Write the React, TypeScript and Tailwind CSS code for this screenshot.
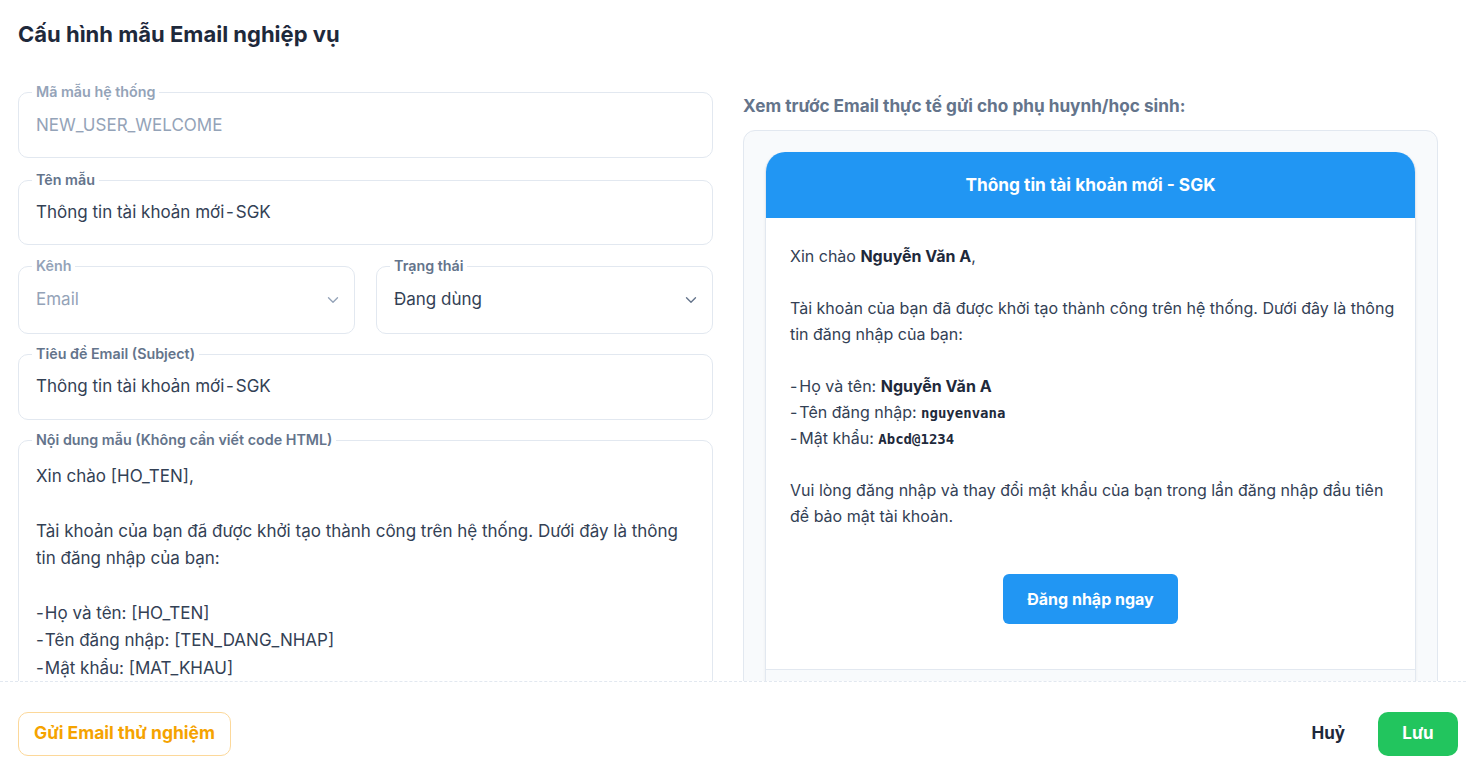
import React from "react";

const FONT = "font-['Inter','Noto_Sans',sans-serif]";
const MONO = "font-['DejaVu_Sans_Mono',monospace]";

// hyphen with tight spacing on both sides
function Dash() {
  return <span className="[word-spacing:-3px]"> - </span>;
}

function Field({
  label,
  children,
  muted = false,
  className = "",
  contentClass = "h-[46px] mb-[8px]",
}: {
  label: string;
  children: React.ReactNode;
  muted?: boolean;
  className?: string;
  contentClass?: string;
}) {
  return (
    <fieldset className={`border border-[#e2e8f0] rounded-[10px] px-[17px] min-w-0 ${className}`}>
      <legend
        className={`px-[4px] -ml-[4px] text-[14.3px] leading-[20px] font-semibold ${
          muted ? "text-[#94a3b8]" : "text-[#64748b]"
        }`}
      >
        {label}
      </legend>
      <div className={`flex items-center ${contentClass}`}>{children}</div>
    </fieldset>
  );
}

function Chevron({ className = "" }: { className?: string }) {
  return (
    <svg viewBox="0 0 24 24" width="18" height="18" fill="none" stroke="currentColor" strokeWidth="1.8" strokeLinecap="round" strokeLinejoin="round" className={className}>
      <path d="M6 9l6 6 6-6" />
    </svg>
  );
}

// visible part of the template body (the rest sits below the scroll fold)
const bodyLines: React.ReactNode[] = [
  "Xin chào [HO_TEN],",
  "",
  "Tài khoản của bạn đã được khởi tạo thành công trên hệ thống. Dưới đây là thông",
  "tin đăng nhập của bạn:",
  "",
  <>-<span className="ml-[1px]">Họ và tên: [HO_TEN]</span></>,
  <>-<span className="ml-[1px]">Tên đăng nhập: [TEN_DANG_NHAP]</span></>,
  <>-<span className="ml-[1px]">Mật khẩu: [MAT_KHAU]</span></>,
];

export default function App() {
  return (
    <div className={`h-[768px] w-full flex flex-col bg-white text-[#1e293b] ${FONT}`}>
      <div className="h-[681px] overflow-hidden pl-[18px] pr-[28px]">
        <h1 className="text-[22px] font-bold leading-[30px] mt-[19px] text-[#1e293b]">Cấu hình mẫu Email nghiệp vụ</h1>

        <div className="grid grid-cols-2 gap-[30px] mt-[33px]">
          {/* form column */}
          <div className="flex flex-col">
            <Field label="Mã mẫu hệ thống" muted contentClass="h-[47px] mb-[8px]">
              <span className="text-[17px] text-[#94a3b8]">NEW_USER_WELCOME</span>
            </Field>
            <Field label="Tên mẫu" className="mt-[12px]">
              <span className="text-[17px] text-[#334155] whitespace-nowrap">
                Thông tin tài khoản mới<Dash />SGK
              </span>
            </Field>
            <div className="grid grid-cols-2 gap-[21px] mt-[11px]">
              <Field label="Kênh" muted contentClass="h-[49px] pb-[2px] mb-[8px]">
                <span className="text-[17px] text-[#94a3b8] flex-1">Email</span>
                <Chevron className="text-[#94a3b8] -mr-[5px]" />
              </Field>
              <Field label="Trạng thái" contentClass="h-[49px] pb-[2px] mb-[8px]">
                <span className="text-[17px] text-[#334155] flex-1">Đang dùng</span>
                <Chevron className="text-[#64748b] -mr-[5px]" />
              </Field>
            </div>
            <Field label="Tiêu đề Email (Subject)" className="mt-[10px]" contentClass="h-[46px] mb-[9px]">
              <span className="text-[17px] text-[#334155] whitespace-nowrap">
                Thông tin tài khoản mới<Dash />SGK
              </span>
            </Field>
            <fieldset className="mt-[10px] border border-[#e2e8f0] rounded-[10px] px-[17px] min-w-0">
              <legend className="px-[4px] -ml-[4px] text-[14.3px] leading-[20px] font-semibold text-[#64748b]">
                Nội dung mẫu (Không cần viết code HTML)
              </legend>
              <div className="pt-[13px] pb-[80px] text-[17px] leading-[27.4px] text-[#334155] whitespace-nowrap">
                {bodyLines.map((l, i) => (
                  <div key={i} className="h-[27.4px]">{l}</div>
                ))}
              </div>
            </fieldset>
          </div>

          {/* preview column */}
          <div className="min-w-0">
            <div className="text-[17.2px] font-bold leading-[24px] text-[#64748b] mt-[12px] whitespace-nowrap">
              Xem trước Email thực tế gửi cho phụ huynh/học sinh:
            </div>
            <div className="mt-[12px] bg-[#f8fafc] border border-[#e2e8f0] rounded-[12px] p-[21px]">
              <div className="bg-white border border-[#e2e8f0] border-t-0 rounded-t-[20px] overflow-hidden shadow-[0_1px_3px_rgba(15,23,42,0.06)]">
                <div className="h-[66px] bg-[#2196f3] flex items-center justify-center text-white font-bold text-[17.3px]">
                  Thông tin tài khoản mới - SGK
                </div>
                <div className="pl-[24px] pr-[16px] pt-[25px] text-[16px] leading-[26px] text-[#334155]">
                  <div>Xin chào <b className="text-[#1e293b]">Nguyễn Văn A</b>,</div>
                  <div className="h-[26px]" />
                  <div>Tài khoản của bạn đã được khởi tạo thành công trên hệ thống. Dưới đây là thông tin đăng nhập của bạn:</div>
                  <div className="h-[26px]" />
                  <div>-<span className="ml-[2px]">Họ và tên: </span><b className="text-[#1e293b]">Nguyễn Văn A</b></div>
                  <div className="h-[26px]">
                    -<span className="ml-[2px]">Tên đăng nhập: </span>
                    <span className={`${MONO} font-bold text-[14px] leading-[16px] text-[#1e293b]`}>nguyenvana</span>
                  </div>
                  <div className="h-[26px]">
                    -<span className="ml-[2px]">Mật khẩu: </span>
                    <span className={`${MONO} font-bold text-[14px] leading-[16px] text-[#1e293b]`}>Abcd@1234</span>
                  </div>
                  <div className="h-[26px]" />
                  <div>Vui lòng đăng nhập và thay đổi mật khẩu của bạn trong lần đăng nhập đầu tiên để bảo mật tài khoản.</div>
                  <div className="flex justify-center pt-[45px] pb-[45px] pr-[8px]">
                    <button className="h-[50px] w-[175px] rounded-[6px] bg-[#2196f3] text-white font-bold text-[16px]">
                      Đăng nhập ngay
                    </button>
                  </div>
                </div>
                <div className="h-[60px] bg-[#f8fafc] border-t border-[#e2e8f0]" />
              </div>
            </div>
          </div>
        </div>
      </div>

      <div className="flex-1 border-t border-dashed border-[#e2e8f0] flex items-center justify-between pt-[17px] pl-[18px] pr-[8px]">
        <button className="h-[44px] w-[213px] rounded-[10px] border border-[#fcd89a] text-[#f5a300] font-bold text-[17.5px] whitespace-nowrap">
          Gửi Email thử nghiệm
        </button>
        <div className="flex items-center gap-[33px]">
          <button className="text-[17px] font-bold text-[#1e293b] whitespace-nowrap">Huỷ</button>
          <button className="h-[44px] w-[80px] rounded-[10px] bg-[#22c55e] text-white font-bold text-[17px]">Lưu</button>
        </div>
      </div>
    </div>
  );
}
